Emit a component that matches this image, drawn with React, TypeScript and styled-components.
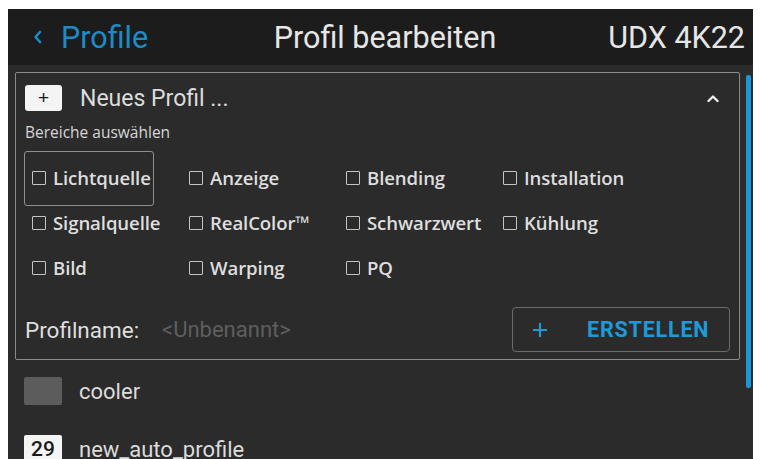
import React from "react";
import styled, { createGlobalStyle } from "styled-components";

const Global = createGlobalStyle`
  *, *::before, *::after { box-sizing: border-box; }
  html, body { margin: 0; padding: 0; background: #ffffff; }
  body { overflow: hidden; font-family: Roboto, "Liberation Sans", sans-serif; }
`;

const Frame = styled.div`
  margin: 9px 9px 0 8px;
  height: 450px;
  background: #2b2b2b;
  display: flex;
  flex-direction: column;
  overflow: hidden;
`;

const Header = styled.header`
  height: 56px;
  flex: 0 0 56px;
  background: #1c1c1c;
  display: grid;
  grid-template-columns: 1fr auto 1fr;
  align-items: center;
  padding: 0 8px 0 25px;
  font-size: 30.5px;
  color: #e6e6e6;
`;

const Back = styled.div`
  display: flex;
  align-items: center;
  gap: 19px;
  color: #1b8cc9;
`;

const Title = styled.div`
  text-align: center;
  margin-right: 8px;
`;

const Device = styled.div`
  text-align: right;
`;

const Body = styled.div`
  flex: 1;
  display: flex;
  min-height: 0;
`;

const Content = styled.div`
  flex: 1;
  padding: 7px 0 0 7px;
  display: flex;
  flex-direction: column;
`;

const ScrollTrack = styled.div`
  flex: 0 0 13px;
  padding: 10px 0 0 6px;
`;

const ScrollThumb = styled.div`
  width: 5px;
  height: 313px;
  border-radius: 2px;
  background: #1a97d8;
`;

const Panel = styled.section`
  border: 1.5px solid #8a8a8a;
  border-radius: 2px;
  padding: 11px 9px 7px 9px;
  display: flex;
  flex-direction: column;
`;

const PanelHead = styled.div`
  display: flex;
  align-items: center;
  height: 28px;
`;

const PlusBox = styled.div`
  width: 37px;
  height: 26px;
  border-radius: 3px;
  background: #f4f4f4;
  color: #1a1a1a;
  display: flex;
  align-items: center;
  justify-content: center;
  font-size: 19px;
  font-family: "Liberation Sans", sans-serif;
`;

const HeadText = styled.div`
  flex: 1;
  margin-left: 18px;
  font-size: 23px;
  color: #dcdcdc;
`;

const Collapse = styled.div`
  width: 14px;
  margin-right: 10px;
  display: flex;
`;

const SubLabel = styled.div`
  margin-top: 9px;
  font-size: 15.5px;
  color: #d6d6d6;
  font-family: "Open Sans", sans-serif;
`;

const AreaGrid = styled.div`
  margin-top: 12px;
  display: grid;
  grid-template-columns: repeat(4, 157px);
  grid-auto-rows: 45px;
`;

const Area = styled.label<{ $focused?: boolean }>`
  position: relative;
  display: flex;
  align-items: center;
  align-self: center;
  justify-self: start;
  height: 30px;
  padding: 0 3px 0 7px;
  gap: 7px;
  font-family: "Open Sans", sans-serif;
  font-weight: 600;
  font-size: 18.6px;
  letter-spacing: -0.1px;
  color: #dedede;
  &::after {
    content: "";
    position: absolute;
    left: -1px;
    right: 0;
    top: -12px;
    bottom: -13px;
    border: 1.5px solid ${(p) => (p.$focused ? "#8f8f8f" : "transparent")};
    border-radius: 3px;
  }
`;

const Box = styled.span`
  width: 14px;
  height: 14px;
  border: 1.8px solid #c4c4c4;
  border-radius: 1px;
`;

const NameRow = styled.div`
  margin-top: 17px;
  display: flex;
  align-items: center;
`;

const NameLabel = styled.div`
  font-size: 22.5px;
  color: #dedede;
  width: 137px;
`;

const NameValue = styled.div`
  flex: 1;
  font-size: 22px;
  color: #5e5e5e;
`;

const CreateButton = styled.button`
  width: 218px;
  height: 45px;
  border: 1px solid #6a6a6a;
  border-radius: 4px;
  background: transparent;
  display: flex;
  align-items: center;
  padding: 0 0 0 19px;
  color: #1e9ad8;
  font-family: Roboto, "Liberation Sans", sans-serif;
  font-weight: 700;
  font-size: 21.5px;
  letter-spacing: 0.8px;
  gap: 39px;
`;

const ProfileList = styled.div`
  display: flex;
  flex-direction: column;
  padding: 17px 0 0 9px;
  gap: 30px;
`;

const ProfileRow = styled.div`
  display: flex;
  align-items: center;
  height: 28px;
  gap: 17px;
  font-size: 22px;
  color: #dcdcdc;
`;

const Swatch = styled.div<{ $light?: boolean }>`
  width: 38px;
  height: 28px;
  border-radius: 2px;
  background: ${(p) => (p.$light ? "#f4f4f4" : "#5c5c5c")};
  color: #1a1a1a;
  display: flex;
  align-items: center;
  justify-content: center;
  font-size: 21px;
  font-weight: 500;
`;

const areas = [
  "Lichtquelle",
  "Anzeige",
  "Blending",
  "Installation",
  "Signalquelle",
  "RealColor™",
  "Schwarzwert",
  "Kühlung",
  "Bild",
  "Warping",
  "PQ",
];

export default function App() {
  return (
    <>
      <Global />
      <Frame>
        <Header>
          <Back>
            <svg width="9" height="14" viewBox="0 0 9 14">
              <path d="M7 2 L2.5 7 L7 12" fill="none" stroke="#1b8cc9" strokeWidth="2.6" strokeLinecap="round" strokeLinejoin="round" />
            </svg>
            <span>Profile</span>
          </Back>
          <Title>Profil bearbeiten</Title>
          <Device>UDX 4K22</Device>
        </Header>
        <Body>
          <Content>
            <Panel>
              <PanelHead>
                <PlusBox>+</PlusBox>
                <HeadText>Neues Profil ...</HeadText>
                <Collapse>
                  <svg width="14" height="9" viewBox="0 0 14 9">
                    <path d="M2.5 7 L7 2.5 L11.5 7" fill="none" stroke="#ededed" strokeWidth="2.4" strokeLinecap="round" strokeLinejoin="round" />
                  </svg>
                </Collapse>
              </PanelHead>
              <SubLabel>Bereiche auswählen</SubLabel>
              <AreaGrid>
                {areas.map((a, i) => (
                  <Area key={a} $focused={i === 0}>
                    <Box />
                    {a}
                  </Area>
                ))}
              </AreaGrid>
              <NameRow>
                <NameLabel>Profilname:</NameLabel>
                <NameValue>&lt;Unbenannt&gt;</NameValue>
                <CreateButton>
                  <svg width="16" height="16" viewBox="0 0 16 16">
                    <path d="M8 1 V15 M1 8 H15" stroke="#1e9ad8" strokeWidth="2.2" />
                  </svg>
                  ERSTELLEN
                </CreateButton>
              </NameRow>
            </Panel>
            <ProfileList>
              <ProfileRow>
                <Swatch />
                cooler
              </ProfileRow>
              <ProfileRow>
                <Swatch $light>29</Swatch>
                new_auto_profile
              </ProfileRow>
            </ProfileList>
          </Content>
          <ScrollTrack>
            <ScrollThumb />
          </ScrollTrack>
        </Body>
      </Frame>
    </>
  );
}
